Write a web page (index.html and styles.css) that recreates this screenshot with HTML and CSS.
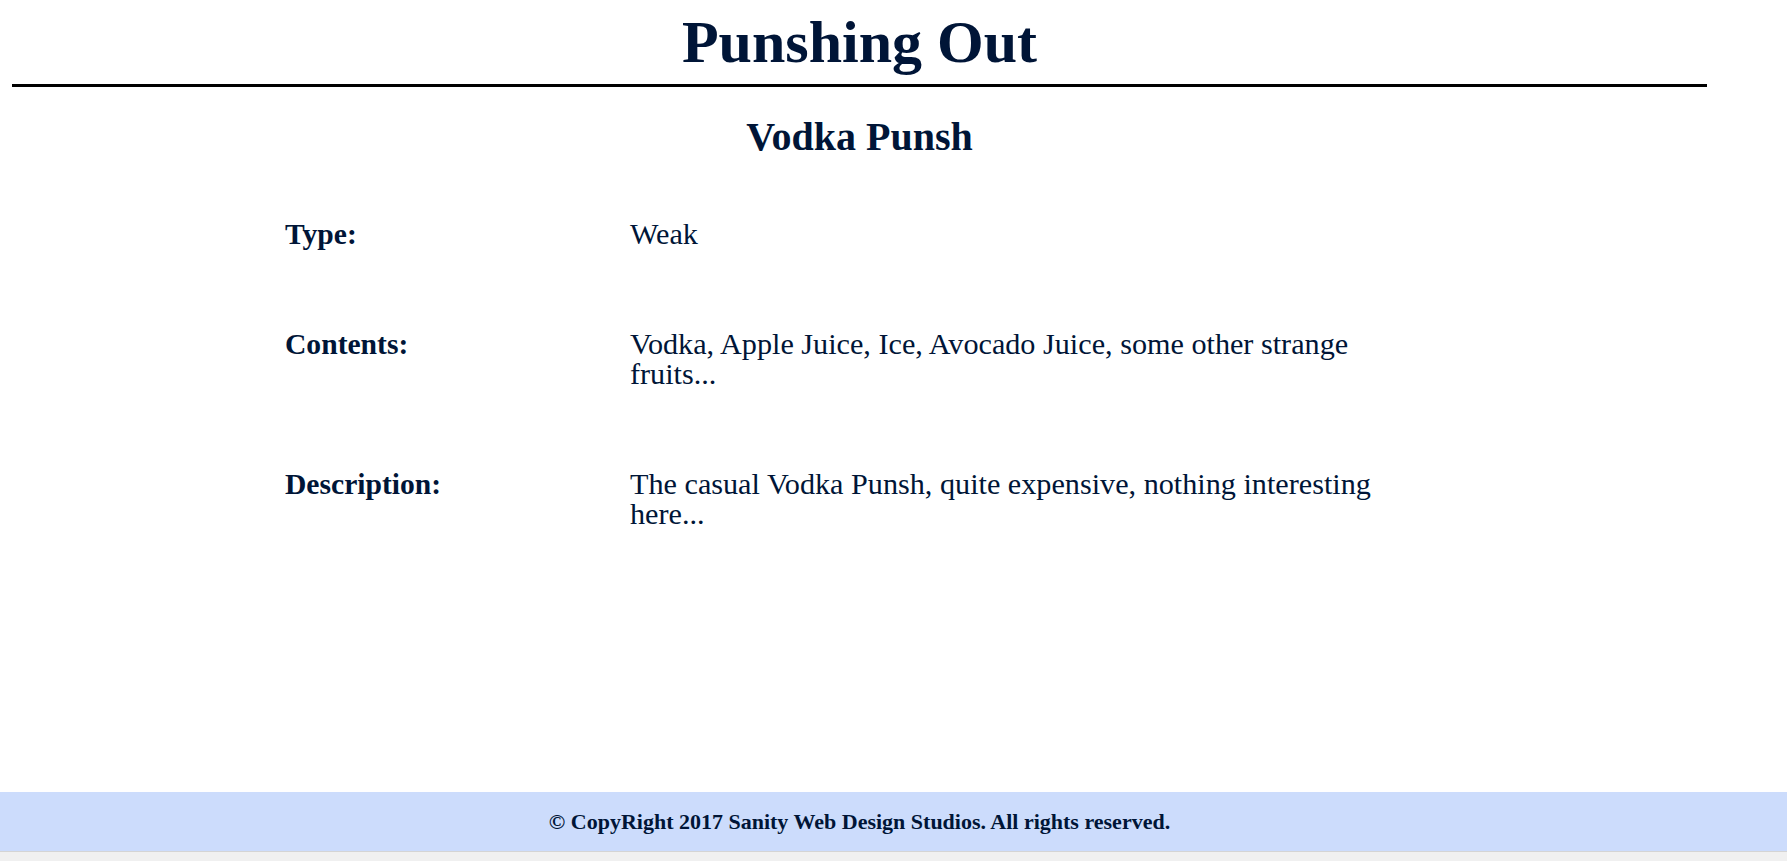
FILE: index.html
```html
<!DOCTYPE html>
<html lang="en">
<head>
<meta charset="utf-8">
<title>Punshing Out</title>
<link rel="stylesheet" href="styles.css">
</head>
<body>
  <div class="page">
    <main class="main">
      <header class="header">
        <h1 class="site-title">Punshing Out</h1>
      </header>
      <h2 class="drink-name">Vodka Punsh</h2>
      <div class="details">
        <div class="label">Type:</div>
        <div class="value">Weak</div>
        <div class="label">Contents:</div>
        <div class="value">Vodka, Apple Juice, Ice, Avocado Juice, some other strange fruits...</div>
        <div class="label">Description:</div>
        <div class="value">The casual Vodka Punsh, quite expensive, nothing interesting here...</div>
      </div>
    </main>
    <footer class="footer">
      <p class="footer-text">© CopyRight 2017 Sanity Web Design Studios. All rights reserved.</p>
    </footer>
    <div class="statusbar"></div>
  </div>
</body>
</html>
```

FILE: styles.css
```css
html, body {
  margin: 0;
  padding: 0;
  background: #ffffff;
}

body {
  font-family: "Liberation Serif", "Times New Roman", serif;
  color: #001537;
}

.page {
  display: flex;
  flex-direction: column;
  min-height: 100vh;
}

.main {
  flex: 1;
  margin: 0 80px 0 12px;
}

.header {
  padding-top: 9px;
  border-bottom: 3px solid #000000;
}

.site-title {
  margin: 0;
  padding-bottom: 9px;
  font-size: 60px;
  line-height: 66px;
  font-weight: bold;
  text-align: center;
}

.drink-name {
  margin: 28px 0 0;
  font-size: 40px;
  line-height: 43px;
  font-weight: bold;
  text-align: center;
}

.details {
  display: grid;
  grid-template-columns: 345px 770px;
  margin: 21px 0 0 273px;
  line-height: 30px;
}

.label,
.value {
  padding: 40px 0;
}

.label {
  font-size: 29.6px;
  font-weight: bold;
}

.value {
  font-size: 30.2px;
}

.footer {
  background: #ccdcfc;
}

.footer-text {
  margin: 0 80px 0 12px;
  padding: 17px 0;
  font-size: 22px;
  line-height: 25px;
  font-weight: bold;
  text-align: center;
}

.statusbar {
  height: 9px;
  background: #f0f0f0;
  border-top: 1px solid #d4d4d4;
}
```
